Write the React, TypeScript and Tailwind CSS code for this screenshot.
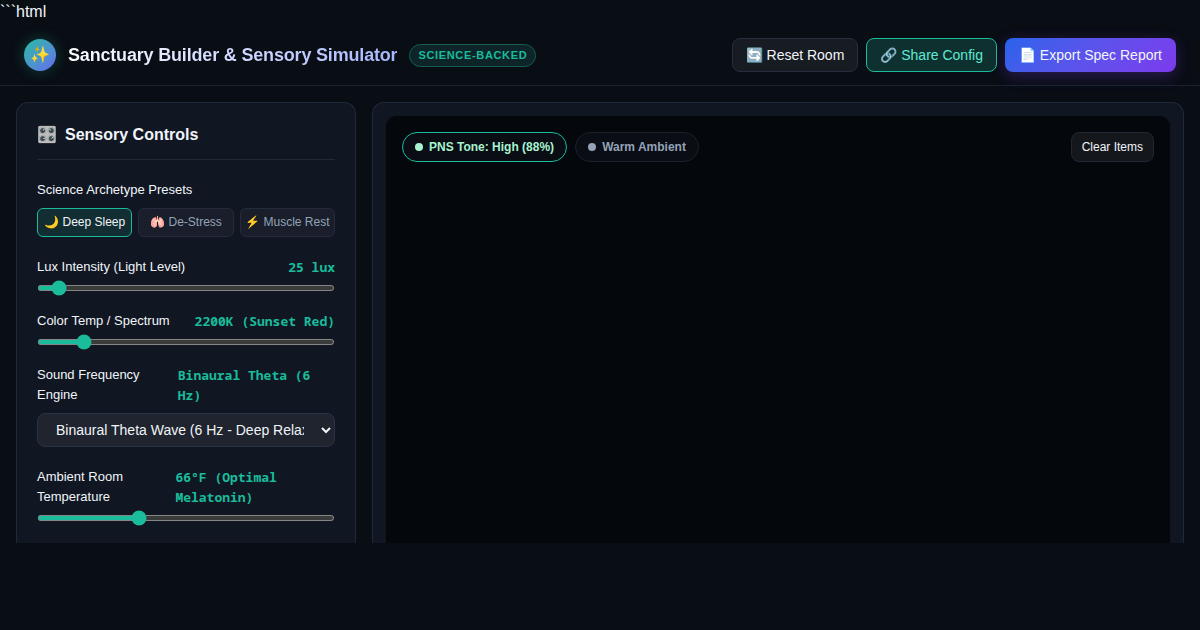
import { useState } from "react";
import type { ReactNode } from "react";

const PRESETS = ["🌙 Deep Sleep", "🫁 De-Stress", "⚡ Muscle Rest"];

const SOUNDS = [
  "Binaural Theta Wave (6 Hz - Deep Relaxation)",
  "Pink Noise (Soft Rain)",
  "Brown Noise (Deep Rumble)",
];

function FieldLabel({ id, label, value }: { id: string; label: string; value: string }) {
  return (
    <div className="mb-2 flex justify-between text-[13px] leading-5">
      <label htmlFor={id}>{label}</label>
      <output htmlFor={id} className="font-['Noto_Sans_Mono','DejaVu_Sans_Mono',monospace] font-bold text-[#1abc9c]">
        {value}
      </output>
    </div>
  );
}

function SliderField(props: {
  id: string;
  label: string;
  value: string;
  min: number;
  max: number;
  start: number;
}) {
  return (
    <div>
      <FieldLabel id={props.id} label={props.label} value={props.value} />
      <input
        id={props.id}
        type="range"
        min={props.min}
        max={props.max}
        defaultValue={props.start}
        className="block h-1.5 w-full cursor-pointer accent-[#1abc9c]"
      />
    </div>
  );
}

function Pill({ active, children }: { active?: boolean; children: ReactNode }) {
  return (
    <div
      className={
        active
          ? "flex items-center gap-1.5 rounded-full border border-[#1abc9c] bg-[#0a0d14] px-3 py-[5px] text-xs leading-normal font-bold text-[#a7f3d0]"
          : "flex items-center gap-1.5 rounded-full border border-[#1a212d] bg-[#0a0d14] px-3 py-[5px] text-xs leading-normal font-bold text-[#94a3b8]"
      }
    >
      <span className="size-2 rounded-full bg-current" />
      {children}
    </div>
  );
}

export default function App() {
  const [preset, setPreset] = useState(0);

  return (
    <div className="min-h-screen bg-[#090d14] font-['Liberation_Sans',Arial,sans-serif] text-base text-[#f1f5f9] [color-scheme:dark]">
      <p>```html</p>
      <header className="flex items-center justify-between border-b border-[#1a2332] px-6 pt-3.5 pb-[13px]">
        <div className="flex items-center gap-3">
          <div className="flex size-8 items-center justify-center rounded-full bg-linear-135 from-[#1abc9c] to-[#6366f1] text-base shadow-[0_0_15px_rgba(26,188,156,0.3)]">
            ✨
          </div>
          <h1 className="bg-linear-135 from-white to-[#a5b4fc] bg-clip-text text-lg font-bold tracking-[-0.01em] text-transparent">
            Sanctuary Builder &amp; Sensory Simulator
          </h1>
          <span className="rounded-full border border-[#145e52] bg-[#0d2429] px-2 py-0.5 text-[11px] leading-[17px] font-bold tracking-[0.06em] text-[#1abc9c] uppercase">
            Science-Backed
          </span>
        </div>
        <div className="flex gap-2">
          <button className="rounded-lg border border-[#252f3f] bg-[#171b22] px-[13px] py-1.5 text-sm">
            🔄 Reset Room
          </button>
          <button className="rounded-lg border border-[#1abc9c] bg-[#0e302f] px-[13px] py-1.5 text-sm text-[#5eead4]">
            🔗 Share Config
          </button>
          <button className="rounded-lg bg-linear-135 from-[#2563eb] to-[#7c3aed] px-3.5 py-[7px] text-sm shadow-[0_4px_15px_rgba(124,58,237,0.3)]">
            📄 Export Spec Report
          </button>
        </div>
      </header>

      <main className="grid grid-cols-[340px_1fr] gap-4 px-4 pt-4">
        <aside className="flex flex-col gap-5 rounded-t-xl border border-b-0 border-[#1e293b] bg-[#101622] px-5 pt-5 pb-[22px]">
          <h2 className="flex items-center gap-2 border-b border-[#222938] pb-3 text-base font-bold">
            <span>🎛️</span>
            Sensory Controls
          </h2>
          <div>
            <div className="mb-2 text-[13px] leading-5">Science Archetype Presets</div>
            <div className="grid grid-cols-3 gap-1.5">
              {PRESETS.map((name, i) => (
                <button
                  key={name}
                  onClick={() => setPreset(i)}
                  className={
                    i === preset
                      ? "rounded-md border border-[#1abc9c] bg-[#122e33] py-[5px] text-xs leading-[17px] whitespace-nowrap"
                      : "rounded-md border border-[#232c3d] bg-[#191e2a] py-[5px] text-xs leading-[17px] whitespace-nowrap text-[#94a3b8]"
                  }
                >
                  {name}
                </button>
              ))}
            </div>
          </div>
          <SliderField id="lux" label="Lux Intensity (Light Level)" value="25 lux" min={0} max={500} start={25} />
          <SliderField
            id="spectrum"
            label="Color Temp / Spectrum"
            value="2200K (Sunset Red)"
            min={1500}
            max={6500}
            start={2200}
          />
          <div>
            <FieldLabel id="sound" label="Sound Frequency Engine" value="Binaural Theta (6 Hz)" />
            <select
              id="sound"
              className="block w-full rounded-lg border border-[#293347] bg-[#1f242e] px-3.5 py-[7px] text-sm leading-[19px]"
            >
              {SOUNDS.map((s) => (
                <option key={s}>{s}</option>
              ))}
            </select>
          </div>
          <SliderField
            id="temperature"
            label="Ambient Room Temperature"
            value="66°F (Optimal Melatonin)"
            min={60}
            max={78}
            start={66}
          />
        </aside>

        <section className="flex rounded-t-xl border border-b-0 border-[#1e293b] bg-[#101622] px-3 pt-3">
          <div className="flex grow items-start justify-between rounded-t-xl border border-b-0 border-[#10151e] bg-[#04070b] p-4">
            <div className="flex gap-2">
              <Pill active>PNS Tone: High (88%)</Pill>
              <Pill>Warm Ambient</Pill>
            </div>
            <button className="rounded-lg border border-[#1e2733] bg-[#14181c] px-2.5 py-[5px] text-xs leading-normal">
              Clear Items
            </button>
          </div>
        </section>
      </main>
    </div>
  );
}
